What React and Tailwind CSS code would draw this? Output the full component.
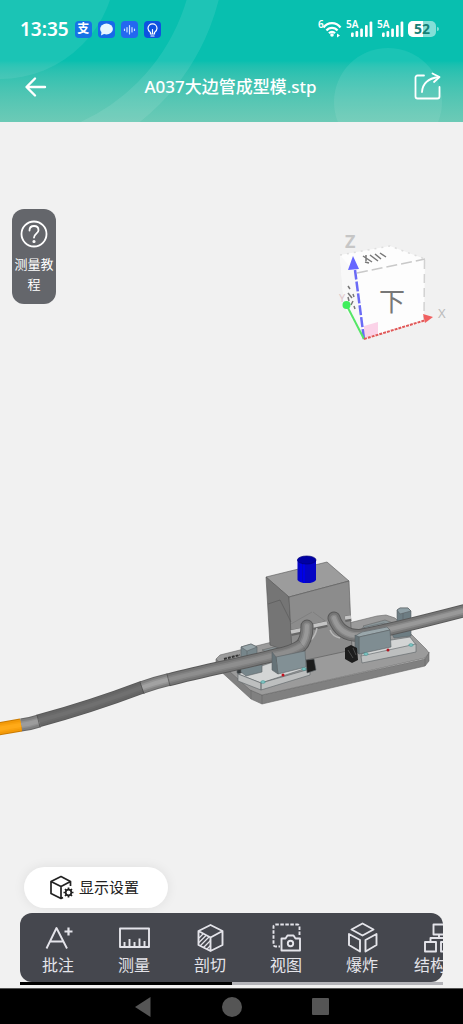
import { useState } from 'react'

const tools = [
  { id: 'annotate', label: '批注', Icon: AnnotateIcon },
  { id: 'measure', label: '测量', Icon: RulerIcon },
  { id: 'section', label: '剖切', Icon: SectionIcon },
  { id: 'view', label: '视图', Icon: ViewIcon },
  { id: 'explode', label: '爆炸', Icon: ExplodeIcon },
  { id: 'structure', label: '结构树', Icon: StructureIcon },
]

export default function App() {
  // share of the tool strip already scrolled past, 0..1
  const [progress, setProgress] = useState(0)

  const onScroll = (e) => {
    const el = e.currentTarget
    const max = el.scrollWidth - el.clientWidth
    setProgress(max > 0 ? el.scrollLeft / max : 0)
  }

  return (
    <div className="flex min-h-svh flex-col bg-[#f1f1f1] font-['Noto_Sans','Noto_Sans_CJK_SC',sans-serif]">
      <Header />

      <main className="relative flex flex-1 flex-col">
        <ModelScene />

        <div className="relative flex items-start justify-between pl-3 pt-[87px]">
          <button className="flex w-11 flex-col items-center rounded-xl bg-[#64666b] pb-[10px] pt-[11px] text-white">
            <HelpIcon />
            <span className="mt-[6px] px-0.5 text-center text-[13px] leading-5">测量教程</span>
          </button>
          <ViewCube />
        </div>

        <div className="relative mt-auto flex flex-col px-5 pb-[3px]">
          <button className="mb-[5px] ml-1 flex h-[41px] items-center gap-1 self-start rounded-full bg-white pl-6 pr-[29px] text-[15px] text-[#222] shadow-[0_0_12px_rgba(0,0,0,0.08)]">
            <DisplayIcon />
            显示设置
          </button>

          <nav
            onScroll={onScroll}
            className="flex overflow-x-auto rounded-xl bg-[#45474e] pb-[7px] pt-2 [scrollbar-width:none]"
          >
            {tools.map(({ id, label, Icon }) => (
              <button
                key={id}
                className="flex w-19 shrink-0 flex-col items-center gap-0.5 text-[16px] leading-5 text-[#e4e4ea]"
              >
                <Icon />
                {label}
              </button>
            ))}
          </nav>
          <div className="h-[3px] bg-[#b4b4b9]">
            <div
              className="h-full w-1/2 bg-black"
              style={{ marginLeft: `${progress * 50}%` }}
            />
          </div>
        </div>
      </main>

      <SystemNav />
    </div>
  )
}

function Header() {
  return (
    <header className="relative overflow-hidden bg-linear-to-b from-[#08bfaf] from-50% to-[#6ccab6] text-white">
      <svg
        className="absolute inset-0 h-full w-full"
        viewBox="0 0 463 122"
        preserveAspectRatio="xMidYMid slice"
        aria-hidden="true"
      >
        <circle cx="0" cy="-37" r="116" fill="#fff" opacity="0.08" />
        <circle cx="0" cy="-55" r="210" fill="none" stroke="#fff" strokeWidth="31" opacity="0.09" />
        <circle cx="388" cy="102" r="54" fill="#fff" opacity="0.08" />
      </svg>

      <div className="relative flex items-center justify-between pb-[17px] pl-5 pr-6 pt-[17px]">
        <div className="flex items-center gap-[6px]">
          <span className="font-['Noto_Sans'] text-[19px] font-semibold leading-6">13:35</span>
          <PayBadge />
          <ChatBadge />
          <VoiceBadge />
          <BulbBadge />
        </div>
        <div className="flex items-center gap-1">
          <WifiIcon />
          <SignalIcon />
          <SignalIcon />
          <Battery level={52} />
        </div>
      </div>

      <div className="relative flex h-16 items-start justify-between pl-6 pr-[22px]">
        <button aria-label="返回" className="mt-[17px]">
          <svg width="24" height="24" viewBox="0 0 24 24" fill="none" stroke="currentColor" strokeWidth="2.4" strokeLinecap="round" strokeLinejoin="round">
            <path d="M21 12H3M11 3.500 2.500 12l8.500 8.500" />
          </svg>
        </button>
        <h1 className="mt-[17px] font-['Noto_Sans','Noto_Sans_CJK_SC',sans-serif] text-[17px] font-medium leading-6">
          A037大边管成型模.stp
        </h1>
        <button aria-label="分享" className="mt-[14px]">
          <svg width="28" height="28" viewBox="0 0 28 28" fill="none" stroke="currentColor" strokeWidth="1.8" strokeLinecap="round" strokeLinejoin="round">
            <path d="M11 3.500H4.500a2 2 0 0 0-2 2v19a2 2 0 0 0 2 2h20a2 2 0 0 0 2-2V15" />
            <path d="M9 20C9.500 12 15 6.500 25.500 5" />
            <path d="M19.500 1.500 26.500 5l-5.500 5" />
          </svg>
        </button>
      </div>
    </header>
  )
}

function PayBadge() {
  return (
    <span className="flex size-[17px] items-center justify-center rounded bg-[#1673e6] text-[12px] font-bold leading-none">
      支
    </span>
  )
}

function ChatBadge() {
  return (
    <svg width="17" height="17" viewBox="0 0 17 17" aria-hidden="true">
      <rect width="17" height="17" rx="4" fill="#1769e8" />
      <ellipse cx="8.500" cy="8" rx="6.400" ry="5.400" fill="#e8f7ff" />
      <path d="M3.500 11 3 14.500l4-2z" fill="#e8f7ff" />
    </svg>
  )
}

function VoiceBadge() {
  return (
    <svg width="17" height="17" viewBox="0 0 17 17" aria-hidden="true">
      <rect width="17" height="17" rx="4" fill="#2468f0" />
      <path d="M3.500 8v1.500M6 6.500V11M8.500 4.500V13M11 6.500V11M13.500 8v1.500" stroke="#cfe4ff" strokeWidth="1.200" strokeLinecap="round" />
    </svg>
  )
}

function BulbBadge() {
  return (
    <svg width="17" height="17" viewBox="0 0 17 17" fill="none" stroke="#fff" strokeWidth="1.200" strokeLinecap="round" aria-hidden="true">
      <rect width="17" height="17" rx="4" fill="#0d52e0" stroke="none" />
      <path d="M6.500 11.500C5 10.500 4 9 4 7.300a4.500 4.500 0 0 1 9 0c0 1.700-1 3.200-2.500 4.200v1.500h-4zM7 15h3M8.500 12V8.500" />
    </svg>
  )
}

function WifiIcon() {
  return (
    <svg width="24" height="24" viewBox="0 -2 24 24" fill="none" stroke="currentColor" aria-label="Wi-Fi">
      <text x="0" y="9" fill="currentColor" stroke="none" fontSize="10" fontWeight="600">6</text>
      <path d="M5.500 8.500a10.500 10.500 0 0 1 17 0M8.500 11.500a7 7 0 0 1 11 0M11 14.300a4 4 0 0 1 6 0" strokeWidth="2.200" />
      <circle cx="14" cy="16" r="1.800" fill="currentColor" stroke="none" />
      <path d="m19 14.500 3 2-3 2z" fill="currentColor" stroke="none" />
    </svg>
  )
}

function SignalIcon() {
  return (
    <svg width="27" height="24" viewBox="0 -2 27 24" fill="currentColor" aria-label="5A">
      <text x="0" y="9" fontSize="10" fontWeight="600">5A</text>
      <rect x="5" y="13.500" width="2.700" height="4.500" rx="1" />
      <rect x="9.500" y="12" width="2.700" height="6" rx="1" />
      <rect x="14.200" y="9.500" width="2.700" height="8.500" rx="1" />
      <rect x="19" y="6" width="2.700" height="12" rx="1" />
      <rect x="23.600" y="2.500" width="2.700" height="15.500" rx="1" />
    </svg>
  )
}

function Battery({ level }) {
  return (
    <div className="flex items-center gap-px">
      <div className="relative h-4 w-7 overflow-hidden rounded-[5px] bg-white/50">
        <div className="h-full bg-white" style={{ width: `${level}%` }} />
        <span className="absolute inset-0 text-center text-[14px] font-bold leading-4 text-[#167f76]">
          {level}
        </span>
      </div>
      <span className="h-1 w-0.5 rounded-r bg-white/50" />
    </div>
  )
}

function HelpIcon() {
  return (
    <svg width="28" height="28" viewBox="0 0 28 28" fill="none" stroke="currentColor" strokeWidth="1.800" strokeLinecap="round" aria-hidden="true">
      <circle cx="14" cy="14" r="12.500" />
      <path d="M9.500 10.500c0-2.700 1.900-4.500 4.500-4.500s4.500 1.700 4.500 4.200c0 3.300-4.500 3.600-4.500 7.300" />
      <circle cx="14" cy="21.500" r="0.700" fill="currentColor" />
    </svg>
  )
}

/** Orientation cube with the X/Y/Z axes. */
function ViewCube() {
  return (
    <svg className="mr-3 mt-4" width="114" height="125" viewBox="337 225 114 125" aria-hidden="true">
      <path d="M340 255 390 246 425 259 424 322 364 339 344 306z" fill="#fdfdfd" />
      <path d="M340 255 355 273 364 339 344 306z" fill="#f8f8f8" />
      <path d="m340 255 50-9 35 13" fill="none" stroke="#dedede" strokeWidth="1.500" strokeDasharray="2 5" />
      <path d="M357 273 425 259" stroke="#c9c9c9" strokeWidth="1.500" strokeDasharray="11 4" />
      <path d="M424.500 260 424 319" stroke="#d2d2d2" strokeWidth="1.500" strokeDasharray="9 5" />
      <path d="m364 326 14-4v12l-14 4z" fill="#fbd3e8" />
      <path d="m363 256 9 6m-6-7 0 6m4-6 8 6m-3-7 6 5m-1-6 6 4m-17 6-4-1" fill="none" stroke="#777" strokeWidth="1.500" />
      <path d="m348 286 2 3m-2 4 4 5m-4-1 1 4m4 0-2 4m3-8-1-3m1 12 1 3" stroke="#777" strokeWidth="1.500" />
      <text x="379" y="311" fontSize="26" fill="#777">下</text>
      <path d="M364 339 355 270" stroke="#6b6bf5" strokeWidth="2.500" strokeDasharray="10 2" />
      <path d="m353 256-5 14 11-1z" fill="#6666ff" />
      <path d="M364 339 347 306" stroke="#55e666" strokeWidth="2" />
      <circle cx="346.500" cy="305" r="4" fill="#3fee5b" />
      <path d="M364 339 426 320" stroke="#e05858" strokeWidth="2" strokeDasharray="3 1" />
      <path d="m433 317-10-3 2 9z" fill="#f06060" />
      <text x="345" y="248" fontSize="18" fontWeight="700" fill="#c6c6c6">Z</text>
      <text x="438" y="318" fontSize="13" fill="#bbb">X</text>
      <text x="339" y="302" fontSize="11" fill="#e0c8cc">Y</text>
    </svg>
  )
}

/** A round bar drawn as stacked strokes, from the rim in to the highlight. */
function Pipe({ d, width = 13, rim = '#595959', body = '#6f6f6f', shine = '#858585', cap = 'butt' }) {
  return (
    <g fill="none" strokeLinejoin="round" strokeLinecap={cap}>
      <path d={d} stroke={rim} strokeWidth={width} />
      <path d={d} stroke={body} strokeWidth={width - 2} />
      <path d={d} stroke={shine} strokeWidth={width - 6} strokeOpacity="0.55" />
      <path d={d} stroke={shine} strokeWidth={width - 9} />
    </g>
  )
}

function ModelScene() {
  return (
    <svg
      className="absolute inset-0 h-full w-full"
      viewBox="0 122 463 866"
      preserveAspectRatio="xMidYMid slice"
      role="img"
      aria-label="A037大边管成型模"
    >
      {/* base plate */}
      <g stroke="#666" strokeWidth="0.600" strokeLinejoin="round">
        <path d="M216 659v8l35 32 11 5 163-38 4-5v-9l-4 7-163 36-11-5z" fill="#808080" />
        <path d="m216 659 4-4 20-5 137-34 9-1 9 3 31 31 3 4-4 5-163 37-12-5z" fill="#9b9b9b" />
        <path d="M262 695v9M251 690v9M425 658v8" />
      </g>
      <path d="m224 659 16-4m-12 7 14-3" stroke="#333" strokeWidth="2" strokeDasharray="3 1" />

      {/* rear rails */}
      <path d="m262 650 16-4 5 2-14 5zM363 626l22-6 8 3-26 7z" fill="#8b9699" stroke="#666" strokeWidth="0.600" />

      {/* mould block */}
      <g stroke="#555" strokeWidth="0.600" strokeLinejoin="round">
        <path d="m266 577 61-15 22 19-60 16z" fill="#9c9c9c" />
        <path d="m266 577 23 20 4 56-23-8z" fill="#757575" />
        <path d="m289 597 60-16 3 69-46 10-14-8z" fill="#8c8c8c" />
        <path d="m268 604 12-4 11 22" fill="none" />
        <path d="m313 612 19 14M312 612l-21 12" fill="none" stroke="#777" />
      </g>
      <path d="m291 633 14-3M313 627l14-3M345 619l6-1" stroke="#666" strokeWidth="6" />
      <path d="m291 632 14-3M313 626l14-3M345 618l6-1" stroke="#c4c4c4" strokeWidth="3.500" />
      <path d="M317 628c-1 5-3 9-6 12M330 630c2 5 5 7 10 8" fill="none" stroke="#b8b8b8" strokeWidth="1.500" />

      {/* plunger */}
      <path d="M297.500 560v20a9.500 4 0 0 0 18.500 0v-20z" fill="#0505c4" />
      <path d="M301 562v20M304 563v20" stroke="#0000e6" strokeWidth="2" />
      <ellipse cx="306.700" cy="560" rx="9.300" ry="4" fill="#0000a4" stroke="#000078" strokeWidth="0.700" />

      {/* left clamp */}
      <g stroke="#5c6366" strokeWidth="0.600" strokeLinejoin="round">
        <path d="m237 662 5-2v16l-5-3z" fill="#373b3d" />
        <path d="m238 674 41-14 31 7-49 16z" fill="#d3d5d5" />
        <path d="m238 674 23 9v7l-23-9zM261 683l49-14v6l-49 15z" fill="#bdbfbf" />
        <path d="m241 647 10-3 6 3v8l5 9v8l-16 4-5-4z" fill="#77868b" />
        <path d="m241 647 10-3 6 3-10 4zM247 651v8" fill="#98a6aa" />
        <path d="m306 660 8-1 2 11-9 3z" fill="#1c1c1c" />
        <path d="m272 655 27-6 6 2-28 7z" fill="#9aa7ab" />
      </g>
      <Pipe d="M300 647 Q307 640 307 626" width={13} body="#777" shine="#999" cap="round" />
      <Pipe d="M168 680 C205 670 240 664 275 655 Q292 652 302 645" width={13} body="#757575" shine="#8e8e8e" />
      <g stroke="#5c6366" strokeWidth="0.600" strokeLinejoin="round">
        <path d="m276 657 29-6 1 16-28 7z" fill="#829095" />
        <path d="m272 652 4 5 2 17-6-4z" fill="#667378" />
      </g>
      <circle cx="283" cy="675" r="1.500" fill="#c1121f" />
      <ellipse cx="263" cy="682" rx="2.200" ry="1.300" fill="#86c9c7" stroke="#3d8f8d" strokeWidth="0.600" />
      <ellipse cx="304" cy="669" rx="2.200" ry="1.300" fill="#86c9c7" stroke="#3d8f8d" strokeWidth="0.600" />

      {/* right clamp */}
      <g stroke="#5c6366" strokeWidth="0.600" strokeLinejoin="round">
        <path d="m361 655 18-13 31-5 6 8-54 12z" fill="#d3d5d5" />
        <path d="m361 656 55-12v8l-54 11z" fill="#bdbfbf" />
        <path d="m397 610 3-2h8l3 3v25l-17 2-3-6 6-4z" fill="#6d7d83" />
        <path d="m397 610 3-2h8l3 3-11 3zM403 613v9" fill="#8fa0a6" />
        <path d="m362 628 22-5 6 4-27 6z" fill="#98a4a8" />
      </g>
      <Pipe d="M334 618 Q340 636 360 635.500 Q390 630 465 610.500" width={13} body="#757575" shine="#999" cap="round" />
      <g stroke="#5c6366" strokeWidth="0.600" strokeLinejoin="round">
        <path d="m355 636 4 1 31-7-3-3-25 5z" fill="#9aa7ab" />
        <path d="m359 637 31-7 1 17-32 7z" fill="#7f8d92" />
        <path d="m355 635 4 2v17l-4-4z" fill="#657277" />
      </g>
      <path d="m345 648 6-3 6 3 1 12-6 3-7-4z" fill="#1d1d1d" />
      <path d="m348 650 5 8M353 648l3 7" stroke="#4a4a4a" />
      <circle cx="388" cy="650" r="1.500" fill="#b01620" />
      <ellipse cx="366" cy="654" rx="2.200" ry="1.300" fill="#86c9c7" stroke="#3d8f8d" strokeWidth="0.600" />
      <ellipse cx="411" cy="645" rx="2.200" ry="1.300" fill="#86c9c7" stroke="#3d8f8d" strokeWidth="0.600" />

      {/* long bar running off to the left */}
      <Pipe d="M38 721 Q90 707 143 687" width={13} body="#656565" shine="#707070" />
      <Pipe d="M142 687.500 Q154 683 169 679.500" width={13} rim="#666" body="#808080" shine="#a2a2a2" />
      <Pipe d="M21 725 Q30 724 39 721" width={13} rim="#666" body="#808080" shine="#9c9c9c" />
      <Pipe d="M-2 729 21 725" width={13} rim="#c97a00" body="#f39a08" shine="#ffaa18" />
      <path d="m37 715 3 12M140 682l4 12M167 674l3 12" stroke="#484848" strokeWidth="0.700" />
    </svg>
  )
}

function DisplayIcon() {
  return (
    <svg width="27" height="27" viewBox="0 0 27 27" fill="none" stroke="currentColor" strokeWidth="1.700" strokeLinejoin="round" aria-hidden="true">
      <path d="M22.500 12V7.500L13 2.500 3 7.500v12l10 5 2-1M3 7.500l10 5 9.500-5M13 12.500v12" />
      <circle cx="20.500" cy="18.500" r="2.800" />
      <path d="M20.500 13.500v2M20.500 21.500v2M15.500 18.500h2M23.500 18.500h2M17 15l1.400 1.400M22.600 20.600 24 22M17 22l1.400-1.400M22.600 16.400 24 15" />
    </svg>
  )
}

function ToolSvg({ children }) {
  return (
    <svg width="32" height="32" viewBox="0 0 32 32" fill="none" stroke="currentColor" strokeWidth="1.900" strokeLinejoin="round" aria-hidden="true">
      {children}
    </svg>
  )
}

function AnnotateIcon() {
  return (
    <ToolSvg>
      <path d="M4.500 27.500 14.500 7 25 27.500M8 20.500h13.500" />
      <path d="M26.500 6.500v8M22.500 10.500h8" strokeWidth="2.200" />
    </ToolSvg>
  )
}

function RulerIcon() {
  return (
    <ToolSvg>
      <rect x="2" y="7.500" width="29" height="18.500" />
      <path d="M6.500 26v-5M11.500 26v-8M16.500 26v-5M21.500 26v-8.500M26.500 26v-6" />
    </ToolSvg>
  )
}

function SectionIcon() {
  return (
    <ToolSvg>
      <path d="M16.500 4 28.500 10v14l-12 6-12-6V10zM4.500 10l12 6.500 12-6.500M16.500 16.500V30" />
      <path d="m5 17 4-4M5 21.500l7-7M6 25l9-9M9.500 26.500l7-7M13 28l3.500-3.500" strokeWidth="1.300" />
    </ToolSvg>
  )
}

function ViewIcon() {
  return (
    <ToolSvg>
      <path d="M29.500 14V5.500a2 2 0 0 0-2-2h-22a2 2 0 0 0-2 2v18a2 2 0 0 0 2 2H10" strokeDasharray="3.500 1.500" />
      <path d="M11.500 17.500h4l2-3h6l2 3h4.500v12H11.500z" />
      <circle cx="20.500" cy="22.500" r="2.700" />
    </ToolSvg>
  )
}

function ExplodeIcon() {
  return (
    <ToolSvg>
      <path d="M16.500 2.500 27.500 8.500l-11 6-11-6zM3 13l11 6v11.500L3 24zM30.500 13l-11 6v11.500l11-6.500z" />
    </ToolSvg>
  )
}

function StructureIcon() {
  return (
    <ToolSvg>
      <path d="M11.500 3.500h11v10h-11zM3 21h11v9.500H3zM19 21h11v9.500H19zM17 13.500V17M8.500 21v-4h16.500v4" />
    </ToolSvg>
  )
}

function SystemNav() {
  return (
    <footer className="flex h-9 justify-center border-t border-[#555] bg-black text-[#555]">
      <button aria-label="后退" className="flex w-[89px] items-center justify-center">
        <svg width="16" height="20" viewBox="0 0 16 20" fill="currentColor">
          <path d="M15.500 0v20L0 10z" />
        </svg>
      </button>
      <button aria-label="主屏幕" className="flex w-[89px] items-center justify-center">
        <span className="size-5 rounded-full bg-current" />
      </button>
      <button aria-label="最近任务" className="flex w-[89px] items-center justify-center">
        <span className="size-[17px] rounded-[1px] bg-current" />
      </button>
    </footer>
  )
}
